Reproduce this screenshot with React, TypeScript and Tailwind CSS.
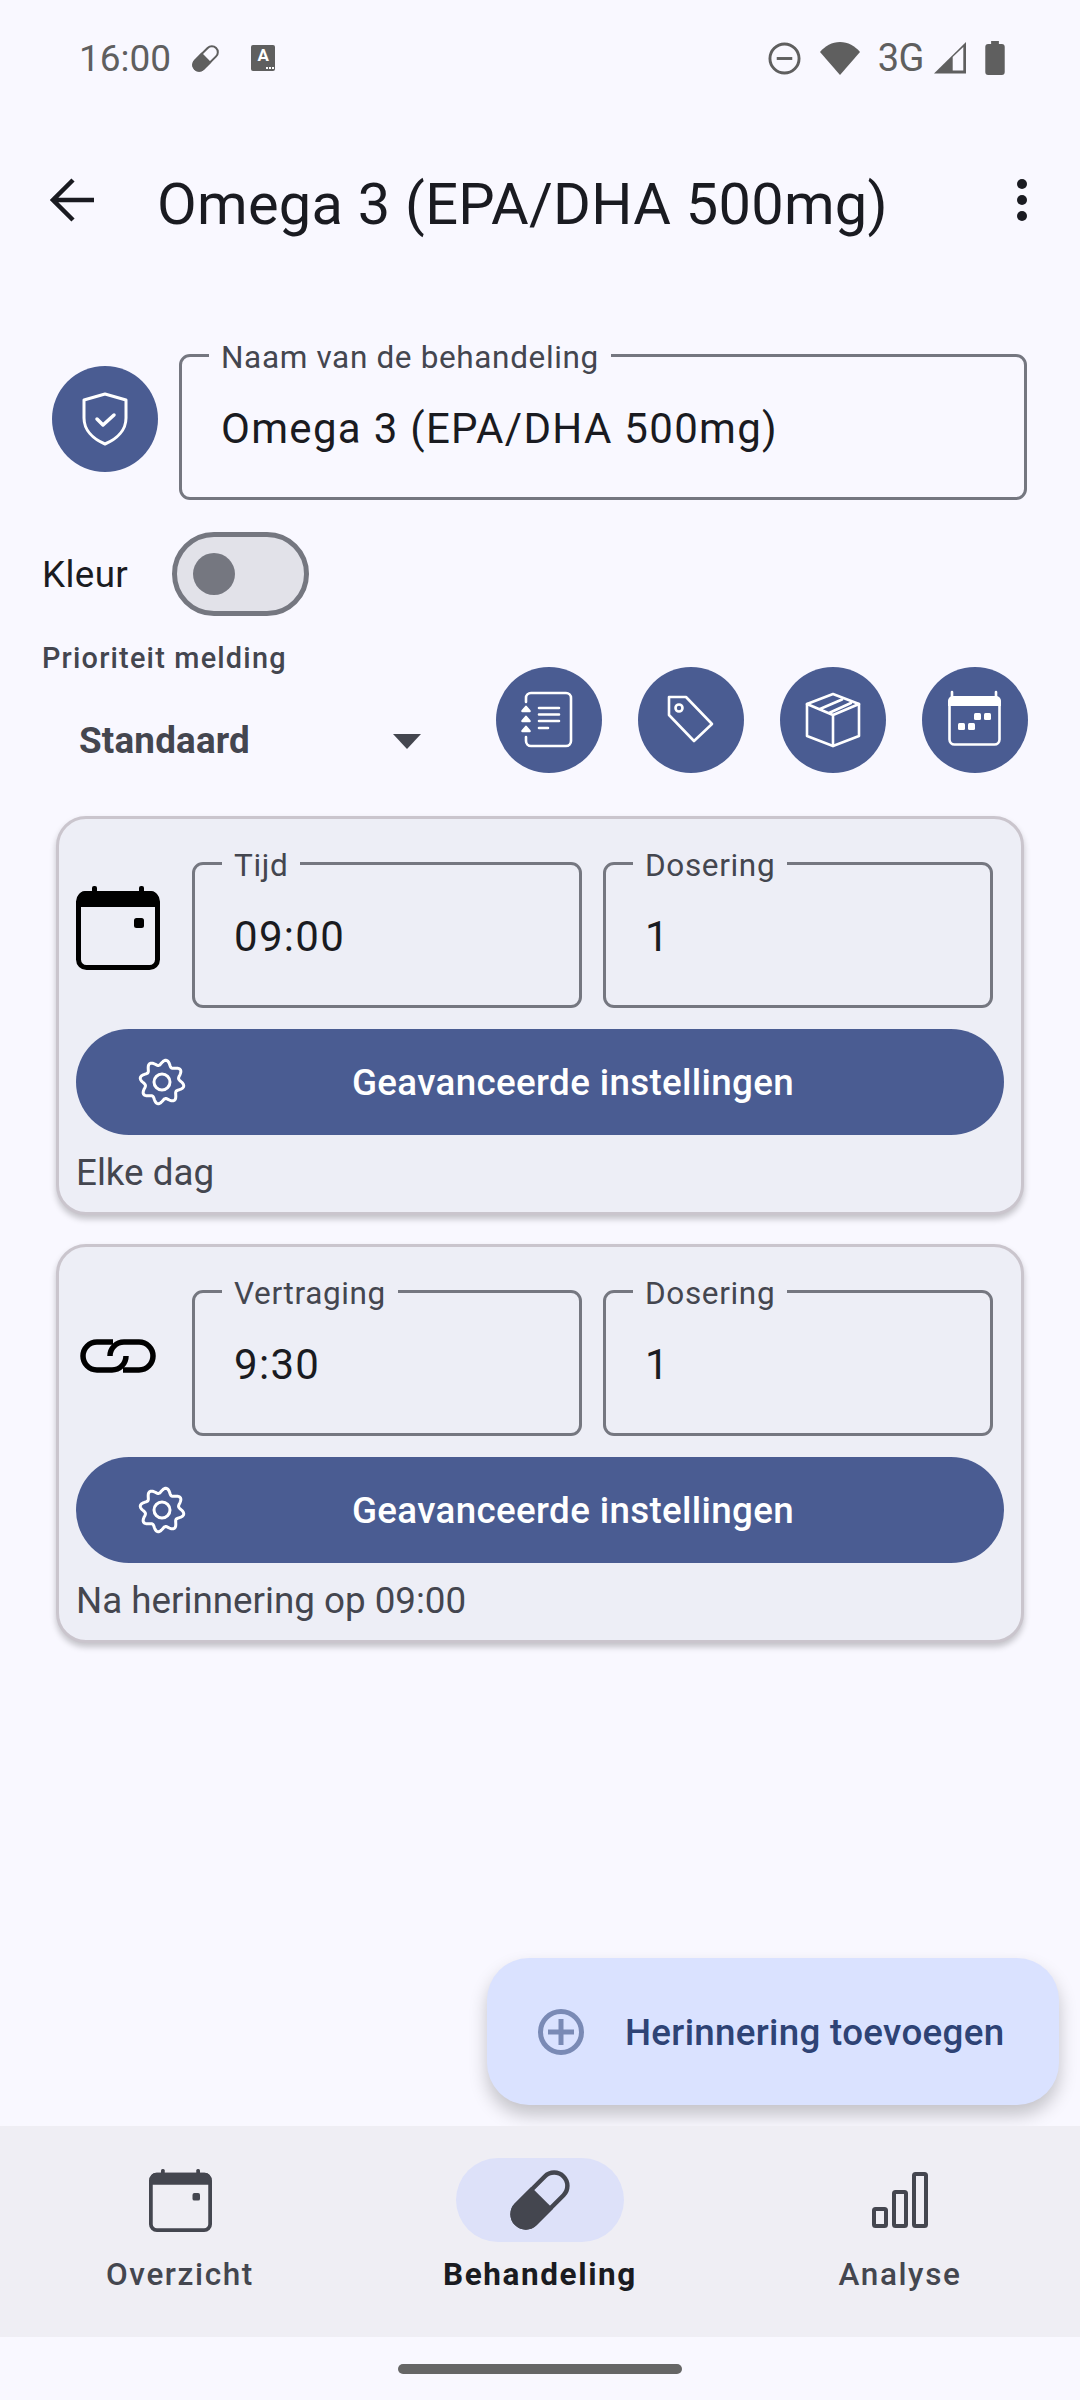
import React from "react";

const gearPoints = Array.from({ length: 160 }, (_, i) => {
  const a = (i / 160) * Math.PI * 2;
  const r = 19.5 + 2.6 * Math.cos(8 * a - Math.PI / 2);
  return `${(24 + r * Math.cos(a)).toFixed(2)},${(24 + r * Math.sin(a)).toFixed(2)}`;
}).join(" ");

const Gear = () => (
  <svg width="48" height="48" viewBox="0 0 48 48" fill="none" stroke="white" strokeWidth="3">
    <polygon points={gearPoints} strokeLinejoin="round" />
    <circle cx="24" cy="24" r="8" />
  </svg>
);

const Calendar = ({ size, color }: { size: number; color: string }) => (
  <svg width={size} height={size} viewBox="0 0 84 84" fill="none">
    <rect x="16" y="0" width="5" height="8" rx="2" fill={color} />
    <rect x="63" y="0" width="5" height="8" rx="2" fill={color} />
    <rect x="2.5" y="7.5" width="79" height="74" rx="8" stroke={color} strokeWidth="5" />
    <path d="M2 21V12a7 7 0 0 1 7-7h66a7 7 0 0 1 7 7v9z" fill={color} />
    <rect x="58" y="32" width="10" height="10" rx="2.5" fill={color} />
  </svg>
);

const Capsule = ({ size, color }: { size: number; color: string }) => (
  <svg width={size} height={size} viewBox="0 0 60 60" fill="none">
    <g transform="rotate(45 30 30)">
      <rect x="16.750" y="-3.250" width="26.500" height="66.500" rx="13.250" stroke={color} strokeWidth="4.500" />
      <path d="M14.500 27h31v23a15.500 15.500 0 0 1-31 0z" fill={color} />
    </g>
  </svg>
);

const RoundButton = ({ children }: { children: React.ReactNode }) => (
  <div className="w-[106px] h-[106px] rounded-full bg-[#4a5c92] shrink-0">
    <svg
      width="106"
      height="106"
      viewBox="0 0 106 106"
      fill="none"
      stroke="white"
      strokeWidth="2.600"
      strokeLinejoin="round"
      strokeLinecap="round"
    >
      {children}
    </svg>
  </div>
);

const Field = ({
  label,
  value,
  className,
  bg,
}: {
  label: string;
  value: string;
  className: string;
  bg: string;
}) => (
  <div className={`relative h-[146px] border-[3px] border-[#757780] rounded-[11px] flex items-center pl-[39px] pt-[3px] ${className}`}>
    <span className={`absolute left-[27px] top-[-17px] px-[12px] text-[31.5px] leading-[36px] tracking-[0.65px] text-[#44464f] ${bg}`}>
      {label}
    </span>
    <span className="text-[42px] leading-[50px] tracking-[1.3px] text-[#1a1b21]">{value}</span>
  </div>
);

const ReminderCard = ({
  icon,
  label,
  value,
  note,
}: {
  icon: React.ReactNode;
  label: string;
  value: string;
  note: string;
}) => (
  <div className="h-[399px] rounded-[30px] bg-[#edeef6] border-[3px] border-[#cac5cd] shadow-[0_4px_6px_rgba(0,0,0,0.22)] px-[17px] pt-[43px]">
    <div className="flex items-center">
      <div className="w-[84px] h-[84px] -mt-[14px] flex items-center justify-center shrink-0">{icon}</div>
      <Field label={label} value={value} className="w-[390px] ml-[32px]" bg="bg-[#edeef6]" />
      <Field label="Dosering" value="1" className="w-[390px] ml-[21px]" bg="bg-[#edeef6]" />
    </div>
    <div className="relative mt-[21px] h-[106px] rounded-full bg-[#4a5c92] flex items-center justify-center text-white text-[36.75px] tracking-[0.35px] font-medium">
      <span className="absolute left-[62px] top-[29px]">
        <Gear />
      </span>
      <span className="ml-[66px] mt-[1px]">Geavanceerde instellingen</span>
    </div>
    <div className="mt-[16px] text-[36.75px] leading-[44px] text-[#44464f]">{note}</div>
  </div>
);

const NavItem = ({
  label,
  active,
  children,
}: {
  label: string;
  active?: boolean;
  children: React.ReactNode;
}) => (
  <div className="flex-1 flex flex-col items-center pt-[32px]">
    <div className={`w-[168px] h-[84px] rounded-full flex items-center justify-center ${active ? "bg-[#dde1f9]" : ""}`}>
      {children}
    </div>
    <div className={`mt-[13px] text-[31.5px] leading-[40px] tracking-[1.6px] ${active ? "font-bold text-[#1a1b21]" : "font-medium text-[#44464f]"}`}>
      {label}
    </div>
  </div>
);

export default function App() {
  return (
    <div className="relative w-[1080px] h-[2400px] overflow-hidden bg-[#f9f8ff] flex flex-col font-['Roboto',sans-serif]">
      {/* status bar */}
      <div className="h-[116px] flex items-center pl-[79px] pr-[75px] text-[#5f5f5f] shrink-0">
        <span className="text-[37px] leading-[44px] mt-[2px]">16:00</span>
        <span className="ml-[21px]">
          <Capsule size={27} color="#5f5f5f" />
        </span>
        <span className="relative ml-[32px] w-[24px] h-[26px] bg-[#5f5f5f] rounded-[2px] flex justify-center text-white text-[17px] leading-[21px] font-bold">
          A
          <span className="absolute right-[1px] bottom-[2px] flex gap-[1px]">
            <i className="w-[2px] h-[2px] bg-white" />
            <i className="w-[2px] h-[2px] bg-white" />
            <i className="w-[2px] h-[2px] bg-white" />
          </span>
        </span>
        <div className="ml-auto flex items-center">
          <svg width="33" height="33" viewBox="0 0 34 34" fill="none">
            <circle cx="17" cy="17" r="15" stroke="#5f5f5f" strokeWidth="3" />
            <rect x="9" y="15.500" width="16" height="3" fill="#5f5f5f" />
          </svg>
          <svg className="ml-[19px]" width="40" height="33" viewBox="0 0 40 33">
            <path d="M20 33L0 10C5 4 12 0 20 0s15 4 20 10z" fill="#5f5f5f" />
          </svg>
          <span className="ml-[18px] text-[38px] leading-[40px] tracking-[-0.5px]">3G</span>
          <svg className="ml-[10px]" width="32" height="32" viewBox="0 0 32 32">
            <path d="M32 0L0 31.500H32z" fill="#5f5f5f" />
            <path d="M18.700 15L29.300 5V28.500H18.700z" fill="#f9f8ff" />
          </svg>
          <svg className="ml-[19px]" width="20" height="34" viewBox="0 0 20 35">
            <path d="M6 0h8v3h3a3 3 0 0 1 3 3v26a3 3 0 0 1-3 3H3a3 3 0 0 1-3-3V6a3 3 0 0 1 3-3h3z" fill="#5f5f5f" />
          </svg>
        </div>
      </div>

      {/* top bar */}
      <div className="h-[168px] flex items-center pl-[50px] pr-[52px] shrink-0">
        <svg width="44" height="44" viewBox="0 0 44 44" fill="none" stroke="#1a1b21" strokeWidth="4.500">
          <path d="M44 22H4M23 2L3 22l20 20" />
        </svg>
        <span className="ml-[63px] mt-[8px] text-[57.75px] leading-[70px] tracking-[0.27px] text-[#1a1b21]">Omega 3 (EPA/DHA 500mg)</span>
        <svg className="ml-auto" width="12" height="42" viewBox="0 0 12 42" fill="#1a1b21">
          <circle cx="6" cy="5" r="5" />
          <circle cx="6" cy="21" r="5" />
          <circle cx="6" cy="37" r="5" />
        </svg>
      </div>

      {/* name row */}
      <div className="mt-[70px] pl-[52px] flex items-start shrink-0">
        <div className="w-[106px] h-[106px] mt-[12px] rounded-full bg-[#4a5c92] flex items-center justify-center">
          <svg width="48" height="54" viewBox="0 0 48 54" fill="none" stroke="white" strokeWidth="3" strokeLinecap="round" strokeLinejoin="round">
            <path d="M24 2l21 6v18c0 12-9 21-21 26C12 47 3 38 3 26V8z" />
            <path d="M16 27l6 6 11-10" strokeWidth="3.500" />
          </svg>
        </div>
        <Field label="Naam van de behandeling" value="Omega 3 (EPA/DHA 500mg)" className="w-[848px] ml-[21px]" bg="bg-[#f9f8ff]" />
      </div>

      {/* colour switch */}
      <div className="mt-[32px] pl-[42px] flex items-center h-[84px] shrink-0">
        <span className="mt-[2px] text-[36.75px] leading-[44px] tracking-[0.4px] text-[#1a1b21]">Kleur</span>
        <div className="ml-[44px] w-[137px] h-[84px] rounded-full bg-[#e2e2e9] border-[5px] border-[#757780] flex items-center pl-[16px]">
          <div className="w-[42px] h-[42px] rounded-full bg-[#757780]" />
        </div>
      </div>

      {/* priority and shortcuts */}
      <div className="mt-[24px] pl-[42px] pr-[52px] h-[133px] flex justify-between shrink-0">
        <div>
          <div className="mt-[1px] text-[28.875px] leading-[34px] tracking-[1.2px] font-medium text-[#44464f]">Prioriteit melding</div>
          <div className="mt-[44px] flex items-center pl-[37px]">
            <span className="w-[314px] text-[36.75px] leading-[44px] tracking-[0.2px] font-bold text-[#44464f]">Standaard</span>
            <svg width="28" height="15" viewBox="0 0 28 15">
              <path d="M0 0h28L14 15z" fill="#44464f" />
            </svg>
          </div>
        </div>
        <div className="flex gap-[36px] self-end">
          <RoundButton>
            <path d="M30 35v-4a5 5 0 0 1 5-5h35a5 5 0 0 1 5 5v43a5 5 0 0 1-5 5H35a5 5 0 0 1-5-5v-4" />
            <path d="M43 41h20M43 47.500h20M43 54h20M43 61h9" />
            <path d="M30 40l3.500 4h-7zM30 50l3.500 4h-7zM30 60l3.500 4h-7z" fill="white" />
          </RoundButton>
          <RoundButton>
            <path d="M31 30h17l26 27-18 17-25-26z" />
            <circle cx="41" cy="41" r="3.500" />
          </RoundButton>
          <RoundButton>
            <path d="M53 27l26 10v32L53 79 27 69V37z" />
            <path d="M27 37l26 11 26-11M53 48v31M40 42l22-9.500M49 46l22-10" />
          </RoundButton>
          <RoundButton>
            <path d="M30 25v6M74 25v6" />
            <rect x="27.500" y="30.500" width="50" height="47" rx="5" />
            <path d="M26 39v-5a5 5 0 0 1 5-5h43a5 5 0 0 1 5 5v5z" fill="white" stroke="none" />
            <g fill="white" stroke="none">
              <rect x="36" y="56" width="7" height="7" rx="1.500" />
              <rect x="46" y="56" width="7" height="7" rx="1.500" />
              <rect x="52" y="46" width="7" height="7" rx="1.500" />
              <rect x="62" y="46" width="7" height="7" rx="1.500" />
            </g>
          </RoundButton>
        </div>
      </div>

      {/* reminders */}
      <div className="mt-[43px] mx-[56px] flex flex-col gap-[29px] shrink-0">
        <ReminderCard icon={<Calendar size={84} color="#000000" />} label="Tijd" value="09:00" note="Elke dag" />
        <ReminderCard
          icon={
            <svg width="76" height="34" viewBox="0 0 76 34" fill="none" stroke="#000000" strokeWidth="5.500">
              <path d="M33 3H17a14 14 0 0 0 0 28h15a14 14 0 0 0 14-14" />
              <path d="M43 31h16a14 14 0 0 0 0-28H44a14 14 0 0 0-14 14" />
            </svg>
          }
          label="Vertraging"
          value="9:30"
          note="Na herinnering op 09:00"
        />
      </div>

      <div className="grow" />

      {/* bottom nav */}
      <div className="relative z-10 h-[211px] bg-[#efeef4] flex shrink-0">
        <NavItem label="Overzicht">
          <Calendar size={63} color="#44464f" />
        </NavItem>
        <NavItem label="Behandeling" active>
          <Capsule size={60} color="#44464f" />
        </NavItem>
        <NavItem label="Analyse">
          <svg width="56" height="56" viewBox="0 0 56 56" fill="none" stroke="#44464f" strokeWidth="4" strokeLinejoin="round">
            <rect x="2" y="37" width="12" height="17" rx="1.500" />
            <rect x="22" y="20" width="12" height="34" rx="1.500" />
            <rect x="42" y="2" width="12" height="52" rx="1.500" />
          </svg>
        </NavItem>
      </div>

      {/* gesture bar */}
      <div className="h-[63px] flex justify-center pt-[27px] shrink-0">
        <div className="w-[284px] h-[10px] rounded-full bg-[#666666]" />
      </div>

      {/* add reminder */}
      <div className="absolute left-[487px] top-[1958px] w-[572px] h-[147px] rounded-[42px] bg-[#dae2ff] shadow-[0_10px_18px_rgba(0,0,0,0.22)] flex items-center pl-[50px]">
        <svg width="48" height="48" viewBox="0 0 48 48" fill="none" stroke="#7a8ab5" strokeWidth="5">
          <circle cx="24" cy="24" r="20.500" />
          <path d="M24 11v26M11 24h26" />
        </svg>
        <span className="ml-[40px] mt-[2px] text-[36.75px] font-medium tracking-[0.3px] text-[#2e4375]">Herinnering toevoegen</span>
      </div>
    </div>
  );
}
